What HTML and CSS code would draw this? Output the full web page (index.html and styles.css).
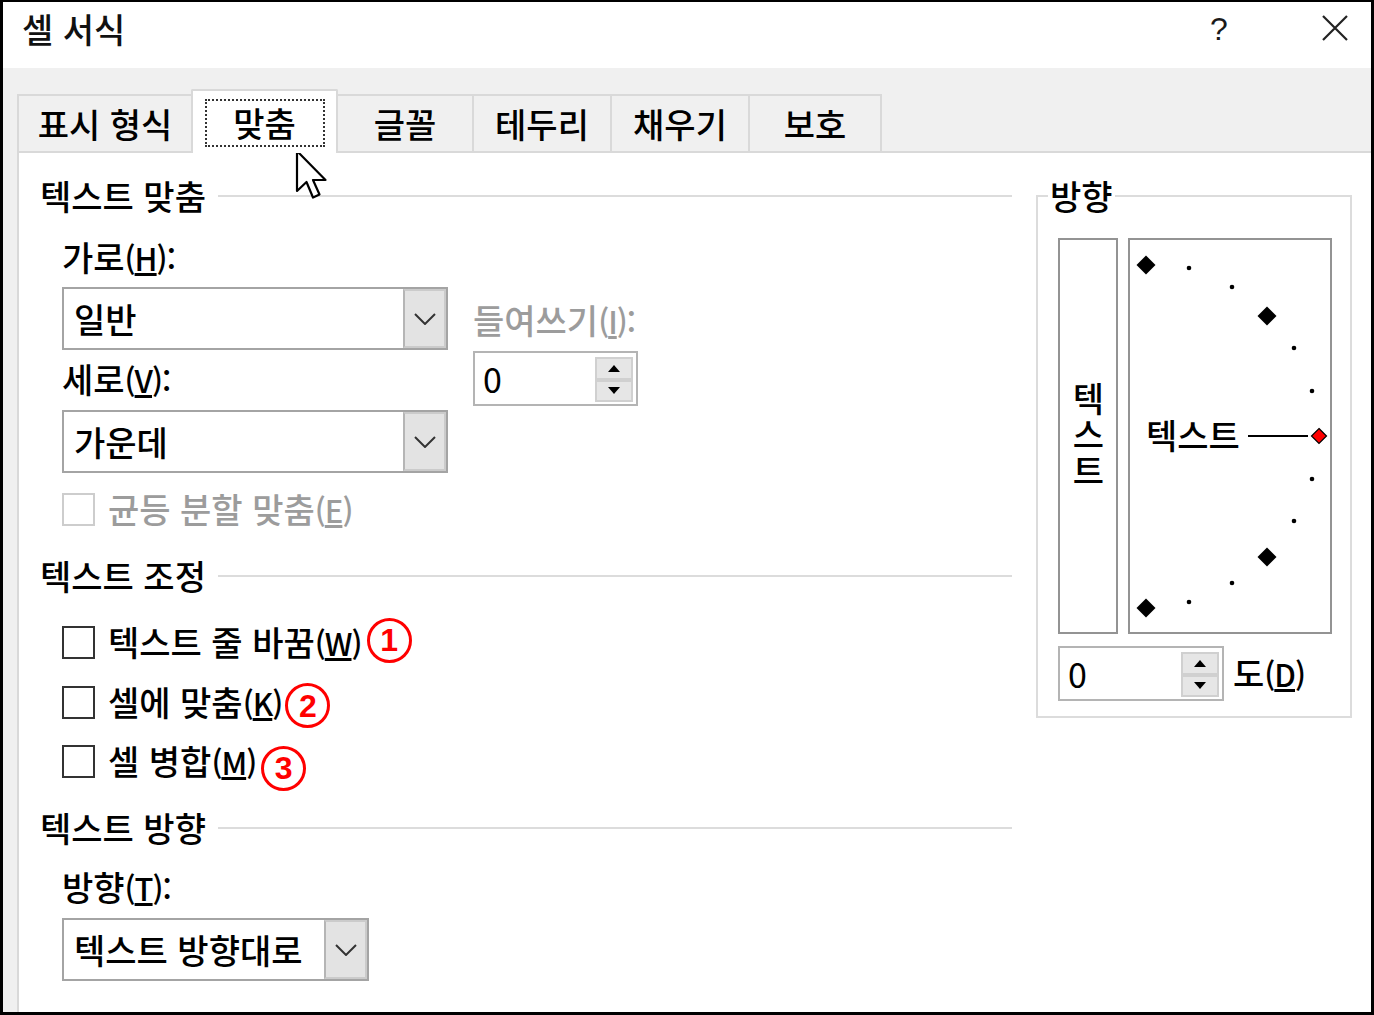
FILE: index.html
```html
<!DOCTYPE html>
<html lang="ko">
<head>
<meta charset="utf-8">
<title>셀 서식</title>
<link rel="stylesheet" href="styles.css">
</head>
<body>
<div class="dialog">
  <div class="titlebar">
    <span class="title">셀 서식</span>
    <span class="help">?</span>
    <svg class="close" viewBox="0 0 26 26" width="26" height="26"><path d="M1 1 L25 25 M25 1 L1 25" stroke="#222" stroke-width="2.2" fill="none"/></svg>
  </div>
  <div class="body">
    <div class="tabs">
      <div class="tab w174">표시 형식</div>
      <div class="tab active"><span class="focus">맞춤</span></div>
      <div class="tab w134 no-left">글꼴</div>
      <div class="tab w138">테두리</div>
      <div class="tab w138">채우기</div>
      <div class="tab w134 last">보호</div>
    </div>
    <div class="panel">
      <div class="left">
        <div class="section-head"><span>텍스트 맞춤</span><i class="rule"></i></div>
        <div class="align-area">
          <div class="col-a">
            <div class="label">가로<span class="mn">(<u>H</u>):</span></div>
            <div class="select w386 mt10"><span class="val">일반</span><span class="drop"><svg width="22" height="12" viewBox="0 0 22 12"><polyline points="1,1 11,11 21,1" fill="none" stroke="#333" stroke-width="2"/></svg></span></div>
            <div class="label mt9">세로<span class="mn">(<u>V</u>):</span></div>
            <div class="select w386 mt11"><span class="val">가운데</span><span class="drop"><svg width="22" height="12" viewBox="0 0 22 12"><polyline points="1,1 11,11 21,1" fill="none" stroke="#333" stroke-width="2"/></svg></span></div>
          </div>
          <div class="col-b">
            <div class="label disabled">들여쓰기<span class="mn">(<u>I</u>):</span></div>
            <div class="spin w165 mt11"><span class="val">0</span><span class="spin-btns"><span class="sb"><i class="tri-up"></i></span><span class="sb"><i class="tri-down"></i></span></span></div>
          </div>
        </div>
        <div class="check-row disabled mt16"><span class="box"></span><span class="ctext">균등 분할 맞춤<span class="mn">(<u>E</u>)</span></span></div>
        <div class="section-head mt27"><span>텍스트 조정</span><i class="rule"></i></div>
        <div class="check-row mt26"><span class="box"></span><span class="ctext">텍스트 줄 바꿈<span class="mn">(<u>W</u>)</span></span><span class="num n1">1</span></div>
        <div class="check-row mt20"><span class="box"></span><span class="ctext">셀에 맞춤<span class="mn">(<u>K</u>)</span></span><span class="num n2">2</span></div>
        <div class="check-row mt19"><span class="box"></span><span class="ctext">셀 병합<span class="mn">(<u>M</u>)</span></span><span class="num n3">3</span></div>
        <div class="section-head mt27"><span>텍스트 방향</span><i class="rule"></i></div>
        <div class="label mt19">방향<span class="mn">(<u>T</u>):</span></div>
        <div class="select w307 mt11"><span class="val">텍스트 방향대로</span><span class="drop"><svg width="22" height="12" viewBox="0 0 22 12"><polyline points="1,1 11,11 21,1" fill="none" stroke="#333" stroke-width="2"/></svg></span></div>
      </div>
      <fieldset class="orient">
        <legend>방향</legend>
        <div class="orient-body">
          <div class="dial-row">
            <div class="vbox"><span class="vtext">텍스트</span></div>
            <div class="dial">
              <svg width="200" height="392" viewBox="0 0 200 392">
                <polygon points="16,15.5 25.5,25 16,34.5 6.5,25" fill="#000"/>
                <polygon points="137,66.5 146.5,76 137,85.5 127.5,76" fill="#000"/>
                <polygon points="137,307.5 146.5,317 137,326.5 127.5,317" fill="#000"/>
                <polygon points="16,358.5 25.5,368 16,377.5 6.5,368" fill="#000"/>
                <circle cx="59" cy="28" r="2.3" fill="#000"/>
                <circle cx="102" cy="47" r="2.3" fill="#000"/>
                <circle cx="164" cy="108" r="2.3" fill="#000"/>
                <circle cx="182" cy="151" r="2.3" fill="#000"/>
                <circle cx="182" cy="239" r="2.3" fill="#000"/>
                <circle cx="164" cy="281" r="2.3" fill="#000"/>
                <circle cx="102" cy="343" r="2.3" fill="#000"/>
                <circle cx="59" cy="362" r="2.3" fill="#000"/>
                <text class="dial-text" x="16" y="209">텍스트</text>
                <line x1="118" y1="196" x2="178" y2="196" stroke="#000" stroke-width="2"/>
                <polygon points="189,188.5 196.5,196 189,203.5 181.5,196" fill="#f00" stroke="#000" stroke-width="1.2"/>
              </svg>
            </div>
          </div>
          <div class="deg-row">
            <div class="spin w166"><span class="val">0</span><span class="spin-btns"><span class="sb"><i class="tri-up"></i></span><span class="sb"><i class="tri-down"></i></span></span></div>
            <span class="deg-label">도<span class="mn">(<u>D</u>)</span></span>
          </div>
        </div>
      </fieldset>
    </div>
  </div>
  <svg class="cursor" width="34" height="52" viewBox="0 0 34 52"><path d="M2 2 L2 42 L11.5 33 L18 48.5 L24.5 45.5 L18 31 L30.5 31 Z" fill="#fff" stroke="#000" stroke-width="2.2" stroke-linejoin="round"/></svg>
</div>
</body>
</html>
```
FILE: styles.css
```css
body {
  margin: 0;
  background: #fff;
}
.dialog {
  width: 1374px;
  height: 1015px;
  box-sizing: border-box;
  border: 3px solid #000;
  border-top-width: 2px;
  display: flex;
  flex-direction: column;
  font-family: "Noto Sans CJK KR", "Malgun Gothic", sans-serif;
  font-size: 34px;
  font-weight: 500;
  line-height: 40px;
  color: #000;
  position: relative;
  overflow: hidden;
  background: #fff;
}
.mn {
  font-size: 31px;
  font-weight: 500;
  letter-spacing: -1px;
}
.titlebar {
  height: 66px;
  flex: none;
  box-sizing: border-box;
  display: flex;
  align-items: flex-start;
  padding: 7px 23px 0 19px;
  background: #fff;
}
.title {
  flex: 1;
  color: #111;
}
.help {
  width: 30px;
  text-align: center;
  font-family: "Liberation Sans", Arial, sans-serif;
  font-size: 32px;
  color: #1a1a1a;
}
.close {
  margin: 6px 0 0 88px;
  flex: none;
}
.body {
  flex: 1;
  min-height: 0;
  background: #f0f0f0;
  padding: 21px 0 0 14px;
  display: flex;
  flex-direction: column;
}
.tabs {
  height: 62px;
  flex: none;
  display: flex;
  align-items: flex-end;
  position: relative;
  z-index: 1;
}
.tab {
  height: 57px;
  box-sizing: border-box;
  border-top: 2px solid #d9d9d9;
  border-left: 2px solid #d9d9d9;
  display: flex;
  align-items: center;
  justify-content: center;
  background: #f0f0f0;
}
.tab.no-left { border-left: none; }
.tab.last { border-right: 2px solid #d9d9d9; }
.w174 { width: 174px; }
.w134 { width: 134px; }
.w138 { width: 138px; }
.tab.active {
  width: 147px;
  height: 64px;
  margin-bottom: -2px;
  background: #fff;
  border: 2px solid #d9d9d9;
  border-bottom: none;
  border-radius: 2px 2px 0 0;
  align-items: flex-start;
  padding-top: 8px;
}
.focus {
  width: 120px;
  height: 48px;
  box-sizing: border-box;
  border: 2px dotted #333;
  display: flex;
  align-items: center;
  justify-content: center;
}
.panel {
  flex: 1;
  background: #fff;
  border-top: 2px solid #d9d9d9;
  border-left: 2px solid #d9d9d9;
  padding: 23px 0 0 21px;
  display: grid;
  grid-template-columns: 972px 316px;
  column-gap: 24px;
  align-items: start;
  align-content: start;
}
.left {
  display: flex;
  flex-direction: column;
}
.section-head {
  height: 40px;
  display: flex;
  align-items: center;
  gap: 12px;
}
.rule {
  flex: 1;
  height: 2px;
  background: #dcdcdc;
}
.label {
  height: 40px;
  margin-left: 22px;
}
.disabled { color: #9c9c9c; }
.align-area {
  display: flex;
  gap: 25px;
  margin-top: 21px;
  margin-left: 22px;
}
.align-area .label { margin-left: 0; }
.col-a, .col-b {
  display: flex;
  flex-direction: column;
}
.col-b { margin-top: 63px; }
.mt9 { margin-top: 9px; }
.mt10 { margin-top: 10px; }
.mt11 { margin-top: 11px; }
.mt16 { margin-top: 16px; }
.mt19 { margin-top: 19px; }
.mt20 { margin-top: 20px; }
.mt26 { margin-top: 26px; }
.mt27 { margin-top: 27px; }
.select {
  height: 63px;
  box-sizing: border-box;
  border: 2px solid #a4a4a4;
  background: #fff;
  display: flex;
}
.left > .select { margin-left: 22px; }
.w386 { width: 386px; }
.w307 { width: 307px; }
.select .val {
  flex: 1;
  padding-left: 10px;
  display: flex;
  align-items: center;
}
.drop {
  width: 43px;
  flex: none;
  box-sizing: border-box;
  background: #e3e3e3;
  border: 2px solid #cbcbcb;
  border-left-color: #b5b5b5;
  display: flex;
  align-items: center;
  justify-content: center;
}
.spin {
  height: 55px;
  box-sizing: border-box;
  border: 2px solid #b4b4b4;
  background: #fff;
  display: flex;
}
.w165 { width: 165px; }
.w166 { width: 166px; }
.spin .val {
  flex: 1;
  padding-left: 8px;
  display: flex;
  align-items: center;
  font-weight: 400;
}
.spin-btns {
  width: 38px;
  flex: none;
  display: flex;
  flex-direction: column;
  padding: 4px 3px 2px 0;
}
.sb {
  flex: 1;
  background: #e6e6e6;
  border: 2px solid #d0d0d0;
  display: flex;
  align-items: center;
  justify-content: center;
}
.tri-up, .tri-down {
  width: 0;
  height: 0;
  border-left: 6px solid transparent;
  border-right: 6px solid transparent;
}
.tri-up { border-bottom: 7px solid #000; }
.tri-down { border-top: 7px solid #000; }
.check-row {
  height: 40px;
  margin-left: 22px;
  display: flex;
  align-items: center;
}
.box {
  width: 33px;
  height: 33px;
  box-sizing: border-box;
  border: 2px solid #333;
  background: #fff;
  flex: none;
}
.check-row.disabled .box { border-color: #cdcdcd; }
.ctext { margin-left: 13px; }
.num {
  width: 45px;
  height: 45px;
  box-sizing: border-box;
  border: 3.5px solid #f00;
  border-radius: 50%;
  color: #f00;
  font-family: "Liberation Sans", Arial, sans-serif;
  font-weight: bold;
  font-size: 32px;
  line-height: 1;
  display: flex;
  align-items: center;
  justify-content: center;
  flex: none;
}
.n1 { margin: -6px 0 -2px 5px; }
.n2 { margin: 1px 0 -6px 3px; }
.n3 { margin: 5px 0 -9px 5px; }
.orient {
  margin: 0;
  padding: 0;
  border: 2px solid #dcdcdc;
  min-width: 0;
  box-sizing: border-box;
  width: 316px;
}
.orient legend {
  margin-left: 10px;
  padding: 0 2px;
  line-height: 40px;
}
.orient-body {
  padding: 22px 0 15px 20px;
}
.dial-row {
  display: flex;
  gap: 10px;
  height: 396px;
}
.vbox {
  width: 60px;
  box-sizing: border-box;
  border: 2px solid #939393;
  display: flex;
  align-items: center;
  justify-content: center;
}
.vtext {
  writing-mode: vertical-rl;
  text-orientation: upright;
  letter-spacing: 2px;
  line-height: 40px;
}
.dial {
  width: 204px;
  box-sizing: border-box;
  border: 2px solid #939393;
}
.dial svg { display: block; }
.dial-text {
  font-family: "Noto Sans CJK KR", "Malgun Gothic", sans-serif;
  font-size: 34px;
  font-weight: 500;
  fill: #000;
}
.deg-row {
  margin-top: 12px;
  display: flex;
  align-items: center;
}
.deg-label { margin-left: 9px; }
.cursor {
  position: absolute;
  left: 292px;
  top: 147px;
}
```
